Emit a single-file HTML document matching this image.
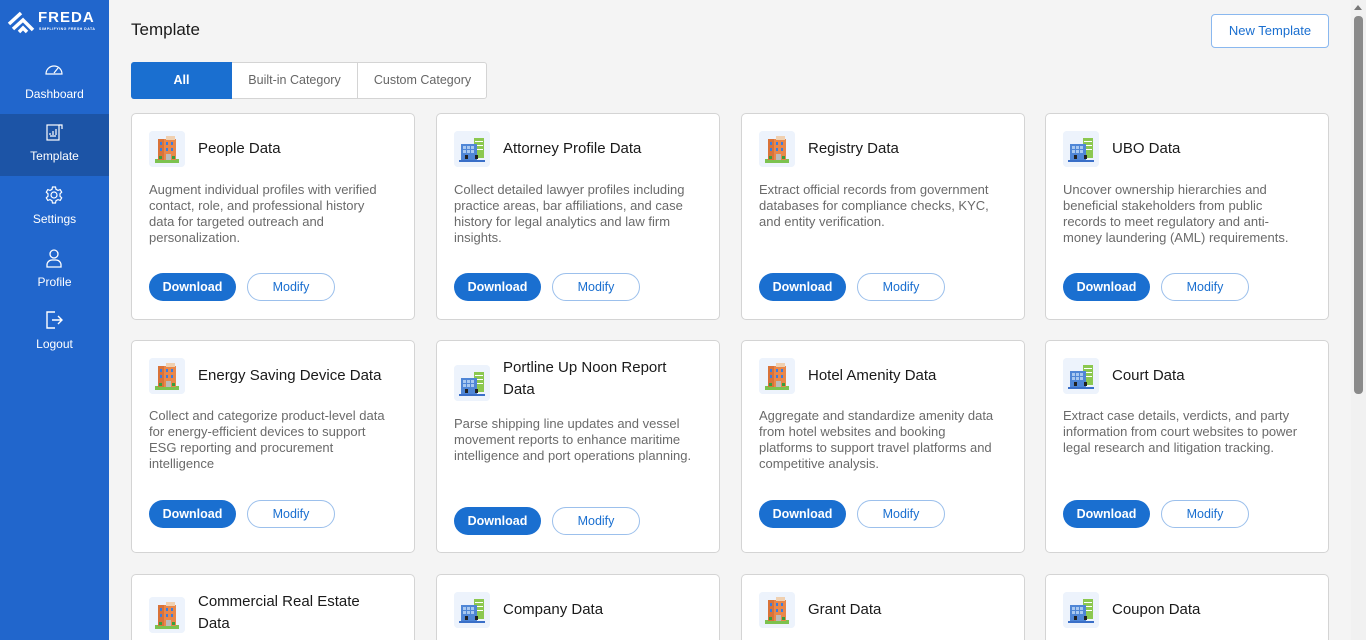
<!DOCTYPE html>
<html style="height:640px;overflow:hidden"><head><meta charset="utf-8"><style>
*{box-sizing:border-box;margin:0;padding:0}
body{width:1366px;height:640px;overflow:hidden;background:#f4f4f4;font-family:"Liberation Sans",sans-serif;position:relative}
.sb{position:absolute;left:0;top:0;width:109px;height:640px;background:#2166cc;color:#fff}
.nav{position:absolute;left:0;width:109px;height:62px;text-align:center;font-size:12px}
.nav svg{position:absolute;left:44px;top:8px}
.nav span{position:absolute;left:0;right:0;top:34px}
.act{background:#1c54a6}
.card{position:absolute;width:284px;background:#fff;border:1px solid #d4d4d4;border-radius:5px}
.ic{position:absolute;left:17px;top:17px;width:36px;height:36px;background:#edf3fc;border-radius:4px}
.t{position:absolute;left:66px;font-size:15px;color:#1a1a1a;line-height:22px}
.d{position:absolute;left:17px;right:8px;font-size:13px;line-height:16px;color:#6a6a6a;white-space:nowrap}
.b1{position:absolute;left:17px;width:87px;height:28px;border-radius:14px;background:#1a6fd0;color:#fff;font-size:12.5px;font-weight:bold;text-align:center;line-height:28px}
.b2{position:absolute;left:115px;width:88px;height:28px;border-radius:14px;border:1px solid #9cc0ec;color:#1a6fd0;font-size:12.5px;text-align:center;line-height:26px}
</style></head><body>
<svg width="0" height="0" style="position:absolute"><defs>
<g id="ob"><rect x="6" y="28" width="24" height="4" fill="#7cc24f"/><path d="M9 8h18v21H9z" fill="#e9874a"/><path d="M9 8h6v21H9z" fill="#d9733a"/><rect x="17" y="5" width="9" height="4" fill="#f0d0b0"/><g fill="#3a7de0"><rect x="11" y="11" width="2" height="3"/><rect x="17" y="11" width="2" height="3"/><rect x="22" y="11" width="2" height="3"/><rect x="11" y="17" width="2" height="3"/><rect x="17" y="17" width="2" height="3"/><rect x="22" y="17" width="2" height="3"/></g><rect x="17" y="23" width="5" height="6" fill="#bbb"/><rect x="10" y="25" width="3" height="3" fill="#3a9e3a"/><rect x="23" y="25" width="3" height="3" fill="#3a9e3a"/></g>
<g id="bb"><rect x="20" y="7" width="10" height="20" fill="#8cc850"/><g fill="#fff"><rect x="21" y="10" width="8" height="1"/><rect x="21" y="14" width="8" height="1"/><rect x="21" y="18" width="8" height="1"/></g><rect x="7" y="13" width="16" height="16" fill="#4f86d6"/><g fill="#a8c8f0"><rect x="9" y="15" width="3" height="3"/><rect x="13" y="15" width="3" height="3"/><rect x="17" y="15" width="3" height="3"/><rect x="9" y="19" width="3" height="3"/><rect x="13" y="19" width="3" height="3"/><rect x="17" y="19" width="3" height="3"/></g><rect x="11" y="24" width="3" height="4" fill="#222"/><rect x="21" y="24" width="3" height="4" fill="#222"/><rect x="5" y="29" width="26" height="2" fill="#3a6fc8"/></g>
</defs></svg>
<div class="sb">
<svg style="position:absolute;left:7px;top:10px" width="28" height="24" viewBox="0 0 28 24"><path d="M2 14L14 3M6 19L16 10L26 20M12 22l4-4 4 4" stroke="#fff" stroke-width="3.5" fill="none"/></svg>
<div style="position:absolute;left:38px;top:9px;font-size:15px;font-weight:bold;letter-spacing:1px">FREDA</div>
<div style="position:absolute;left:39px;top:27px;font-size:3.5px;font-weight:bold;letter-spacing:.5px">SIMPLIFYING FRESH DATA</div>
<div class="nav" style="top:53px"><svg width="20" height="16" viewBox="0 0 20 16"><path d="M2 13A8 8 0 0 1 18 13Z" fill="none" stroke="#fff" stroke-width="1.2"/><path d="M10 12l4-5" stroke="#fff" stroke-width="1.2"/></svg><span>Dashboard</span></div>
<div class="nav act" style="top:114px"><svg width="20" height="20" viewBox="0 0 20 20"><rect x="3" y="3" width="12" height="15" fill="none" stroke="#fff" stroke-width="1.2"/><path d="M15 3h3v4M6 11v2M9 9v4M12 7v6M6 14h6" stroke="#fff" stroke-width="1.2" fill="none"/></svg><span style="top:35px">Template</span></div>
<div class="nav" style="top:177px"><svg width="20" height="20" viewBox="0 0 20 20"><circle cx="10" cy="10" r="3" fill="none" stroke="#fff" stroke-width="1.2"/><path d="M8.5 2h3l.5 2.3 2 1.1 2.2-.8 1.5 2.6-1.7 1.6v2.4l1.7 1.6-1.5 2.6-2.2-.8-2 1.1-.5 2.300h-3l-.5-2.3-2-1.1-2.2.8-1.5-2.6 1.7-1.6V8.8L2.3 7.2l1.5-2.6 2.2.8 2-1.1z" fill="none" stroke="#fff" stroke-width="1.2"/></svg><span style="top:35px">Settings</span></div>
<div class="nav" style="top:240px"><svg width="20" height="20" viewBox="0 0 20 20"><circle cx="10" cy="6" r="4" fill="none" stroke="#fff" stroke-width="1.3"/><path d="M3 19v-2a5 5 0 0 1 5-5h4a5 5 0 0 1 5 5v2z" fill="none" stroke="#fff" stroke-width="1.3"/></svg><span style="top:35px">Profile</span></div>
<div class="nav" style="top:302px"><svg width="20" height="20" viewBox="0 0 20 20"><path d="M11 2H3v16h8M8 10h10M14 6l4 4-4 4" fill="none" stroke="#fff" stroke-width="1.4"/></svg><span style="top:35px">Logout</span></div>
</div>
<div style="position:absolute;left:131px;top:20px;font-size:17px;color:#1a1a1a">Template</div>
<div style="position:absolute;left:1211px;top:14px;width:118px;height:34px;border:1px solid #8ab8ef;border-radius:4px;background:#fff;color:#1a6fd0;font-size:13px;text-align:center;line-height:32px">New Template</div>
<div style="position:absolute;left:131px;top:62px;width:356px;height:37px;border:1px solid #d4d4d4;border-radius:3px;background:#fff;font-size:12.5px;color:#666">
<div style="position:absolute;left:-1px;top:-1px;width:101px;height:37px;background:#1a6fd0;color:#fff;font-weight:bold;text-align:center;line-height:37px;border-radius:3px 0 0 3px">All</div>
<div style="position:absolute;left:100px;top:0;width:126px;height:35px;text-align:center;line-height:35px;border-right:1px solid #d4d4d4">Built-in Category</div>
<div style="position:absolute;left:226px;top:0;width:129px;height:35px;text-align:center;line-height:35px">Custom Category</div>
</div>

<div class="card" style="left:131px;top:113px;height:207px"><svg class="ic" viewBox="0 0 36 36"><rect width="36" height="36" fill="#edf3fc"/><use href="#ob"/></svg><div class="t" style="top:24px">People Data</div><div class="d" style="top:68px">Augment individual profiles with verified<br>contact, role, and professional history<br>data for targeted outreach and<br>personalization.</div><div class="b1" style="top:159px">Download</div><div class="b2" style="top:159px">Modify</div></div>
<div class="card" style="left:436px;top:113px;height:207px"><svg class="ic" viewBox="0 0 36 36"><rect width="36" height="36" fill="#edf3fc"/><use href="#bb"/></svg><div class="t" style="top:24px">Attorney Profile Data</div><div class="d" style="top:68px">Collect detailed lawyer profiles including<br>practice areas, bar affiliations, and case<br>history for legal analytics and law firm<br>insights.</div><div class="b1" style="top:159px">Download</div><div class="b2" style="top:159px">Modify</div></div>
<div class="card" style="left:741px;top:113px;height:207px"><svg class="ic" viewBox="0 0 36 36"><rect width="36" height="36" fill="#edf3fc"/><use href="#ob"/></svg><div class="t" style="top:24px">Registry Data</div><div class="d" style="top:68px">Extract official records from government<br>databases for compliance checks, KYC,<br>and entity verification.</div><div class="b1" style="top:159px">Download</div><div class="b2" style="top:159px">Modify</div></div>
<div class="card" style="left:1045px;top:113px;height:207px"><svg class="ic" viewBox="0 0 36 36"><rect width="36" height="36" fill="#edf3fc"/><use href="#bb"/></svg><div class="t" style="top:24px">UBO Data</div><div class="d" style="top:68px">Uncover ownership hierarchies and<br>beneficial stakeholders from public<br>records to meet regulatory and anti-<br>money laundering (AML) requirements.</div><div class="b1" style="top:159px">Download</div><div class="b2" style="top:159px">Modify</div></div>

<div class="card" style="left:131px;top:340px;height:213px"><svg class="ic" viewBox="0 0 36 36"><rect width="36" height="36" fill="#edf3fc"/><use href="#ob"/></svg><div class="t" style="top:24px">Energy Saving Device Data</div><div class="d" style="top:67px">Collect and categorize product-level data<br>for energy-efficient devices to support<br>ESG reporting and procurement<br>intelligence</div><div class="b1" style="top:159px">Download</div><div class="b2" style="top:159px">Modify</div></div>
<div class="card" style="left:436px;top:340px;height:213px"><svg class="ic" viewBox="0 0 36 36" style="top:24px"><rect width="36" height="36" fill="#edf3fc"/><use href="#bb"/></svg><div class="t" style="top:16px">Portline Up Noon Report<br>Data</div><div class="d" style="top:75px">Parse shipping line updates and vessel<br>movement reports to enhance maritime<br>intelligence and port operations planning.</div><div class="b1" style="top:166px">Download</div><div class="b2" style="top:166px">Modify</div></div>
<div class="card" style="left:741px;top:340px;height:213px"><svg class="ic" viewBox="0 0 36 36"><rect width="36" height="36" fill="#edf3fc"/><use href="#ob"/></svg><div class="t" style="top:24px">Hotel Amenity Data</div><div class="d" style="top:67px">Aggregate and standardize amenity data<br>from hotel websites and booking<br>platforms to support travel platforms and<br>competitive analysis.</div><div class="b1" style="top:159px">Download</div><div class="b2" style="top:159px">Modify</div></div>
<div class="card" style="left:1045px;top:340px;height:213px"><svg class="ic" viewBox="0 0 36 36"><rect width="36" height="36" fill="#edf3fc"/><use href="#bb"/></svg><div class="t" style="top:24px">Court Data</div><div class="d" style="top:67px">Extract case details, verdicts, and party<br>information from court websites to power<br>legal research and litigation tracking.</div><div class="b1" style="top:159px">Download</div><div class="b2" style="top:159px">Modify</div></div>

<div class="card" style="left:131px;top:574px;height:80px;border-bottom:none;border-radius:5px 5px 0 0"><svg class="ic" viewBox="0 0 36 36" style="top:22px"><rect width="36" height="36" fill="#edf3fc"/><use href="#ob"/></svg><div class="t" style="top:16px">Commercial Real Estate<br>Data</div></div>
<div class="card" style="left:436px;top:574px;height:80px;border-bottom:none;border-radius:5px 5px 0 0"><svg class="ic" viewBox="0 0 36 36"><rect width="36" height="36" fill="#edf3fc"/><use href="#bb"/></svg><div class="t" style="top:24px">Company Data</div></div>
<div class="card" style="left:741px;top:574px;height:80px;border-bottom:none;border-radius:5px 5px 0 0"><svg class="ic" viewBox="0 0 36 36"><rect width="36" height="36" fill="#edf3fc"/><use href="#ob"/></svg><div class="t" style="top:24px">Grant Data</div></div>
<div class="card" style="left:1045px;top:574px;height:80px;border-bottom:none;border-radius:5px 5px 0 0"><svg class="ic" viewBox="0 0 36 36"><rect width="36" height="36" fill="#edf3fc"/><use href="#bb"/></svg><div class="t" style="top:24px">Coupon Data</div></div>

<div style="position:absolute;left:1351px;top:0;width:15px;height:640px;background:#f1f1f1"></div>
<div style="position:absolute;left:1354px;top:16px;width:9px;height:378px;background:#8a8a8a;border-radius:4px"></div>
<div style="position:absolute;left:1354px;top:5px;width:0;height:0;border-left:4px solid transparent;border-right:4px solid transparent;border-bottom:5px solid #777"></div>
</body></html>
